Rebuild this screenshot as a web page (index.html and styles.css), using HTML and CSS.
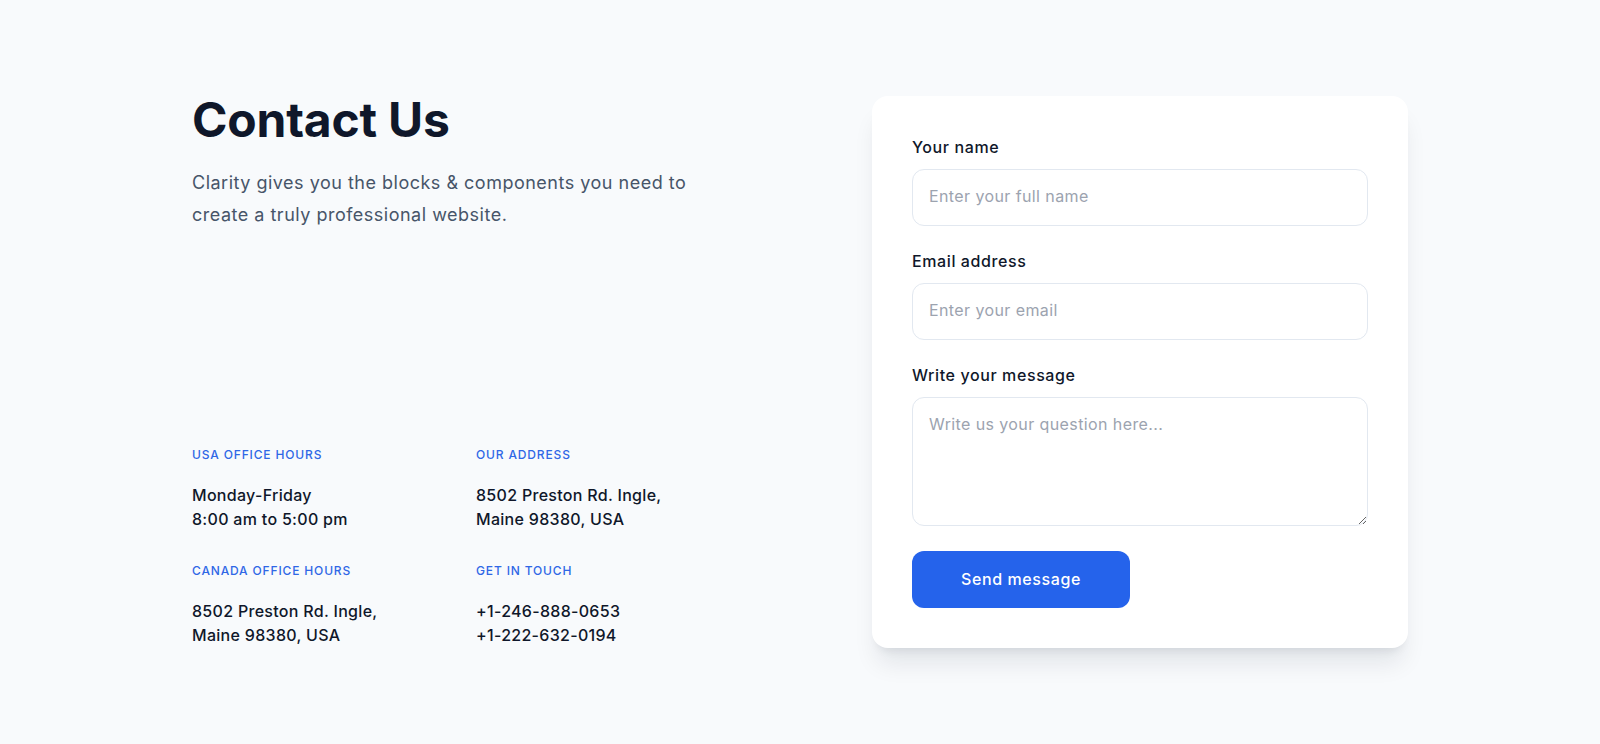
FILE: index.html
```html
<!DOCTYPE html>
<html lang="en">
<head>
<meta charset="utf-8">
<title>Contact Us</title>
<link rel="stylesheet" href="styles.css">
</head>
<body>
<section class="contact">
  <div class="contact__inner">
    <div class="contact__intro">
      <div class="intro__head">
        <h1 class="intro__title">Contact Us</h1>
        <p class="intro__lead">Clarity gives you the blocks &amp; components you need to create a truly professional website.</p>
      </div>
      <div class="info-grid">
        <div class="info">
          <h3 class="info__label">USA office hours</h3>
          <p class="info__value">Monday-Friday<br>8:00 am to 5:00 pm</p>
        </div>
        <div class="info">
          <h3 class="info__label">Our address</h3>
          <p class="info__value">8502 Preston Rd. Ingle,<br>Maine 98380, USA</p>
        </div>
        <div class="info">
          <h3 class="info__label">Canada office hours</h3>
          <p class="info__value">8502 Preston Rd. Ingle,<br>Maine 98380, USA</p>
        </div>
        <div class="info">
          <h3 class="info__label">Get in touch</h3>
          <p class="info__value">+1-246-888-0653<br>+1-222-632-0194</p>
        </div>
      </div>
    </div>

    <form class="card">
      <div class="field">
        <label class="field__label" for="name">Your name</label>
        <input class="field__input" id="name" type="text" placeholder="Enter your full name">
      </div>
      <div class="field">
        <label class="field__label" for="email">Email address</label>
        <input class="field__input" id="email" type="email" placeholder="Enter your email">
      </div>
      <div class="field">
        <label class="field__label" for="message">Write your message</label>
        <textarea class="field__input field__input--area" id="message" placeholder="Write us your question here..."></textarea>
      </div>
      <button class="btn" type="button">Send message</button>
    </form>
  </div>
</section>
</body>
</html>
```

FILE: styles.css
```css
* {
  box-sizing: border-box;
}

html,
body {
  margin: 0;
  padding: 0;
}

body {
  background: #f8fafc;
  font-family: Inter, "Open Sans", "Liberation Sans", sans-serif;
  color: #0f172a;
  -webkit-font-smoothing: antialiased;
}

.contact {
  padding: 96px 0;
}

.contact__inner {
  width: 1216px;
  margin: 0 auto;
  display: grid;
  grid-template-columns: 536px 536px;
  column-gap: 144px;
}

/* left column: heading on top, office details pinned to the bottom */
.contact__intro {
  display: flex;
  flex-direction: column;
  justify-content: space-between;
}

.intro__title {
  margin: 0;
  font-size: 48px;
  line-height: 48px;
  font-weight: 700;
  letter-spacing: -0.2px;
  color: #0f172a;
}

.intro__lead {
  margin: 23px 0 0;
  max-width: 520px;
  font-size: 18px;
  line-height: 32px;
  letter-spacing: 0.5px;
  color: #475569;
}

.info-grid {
  display: grid;
  grid-template-columns: 1fr 1fr;
  column-gap: 32px;
  row-gap: 32px;
  padding-bottom: 1px;
}

.info__label {
  margin: 0 0 20px;
  font-size: 12px;
  line-height: 16px;
  font-weight: 500;
  letter-spacing: 0.85px;
  text-transform: uppercase;
  color: #2f67e6;
}

.info__value {
  margin: 0;
  font-size: 16px;
  line-height: 24px;
  font-weight: 500;
  letter-spacing: 0.3px;
  color: #0f172a;
}

/* form card */
.card {
  background: #fff;
  border-radius: 16px;
  padding: 40px;
  box-shadow: 0 20px 25px -5px rgba(15, 23, 42, 0.09), 0 8px 10px -6px rgba(15, 23, 42, 0.09);
}

.field {
  margin-bottom: 24px;
}

.field__label {
  display: block;
  margin-bottom: 9px;
  font-size: 16px;
  line-height: 22px;
  padding-bottom: 2px;
  font-weight: 500;
  letter-spacing: 0.6px;
  color: #0f172a;
}

.field__input {
  display: block;
  width: 100%;
  height: 57px;
  padding: 0 16px 3px;
  border: 1px solid #e2e8f0;
  border-radius: 12px;
  background: #fff;
  font-family: inherit;
  font-size: 16px;
  letter-spacing: 0.4px;
  color: #0f172a;
  outline: none;
}

.field__input::placeholder {
  color: #9ca3af;
}

.field__input--area {
  height: 129px;
  padding: 14px 16px;
  line-height: 24px;
  resize: vertical;
}

.btn {
  display: block;
  margin-top: 25px;
  height: 57px;
  padding: 0 49px 2px;
  border: 0;
  border-radius: 12px;
  background: #2563eb;
  color: #fff;
  font-family: inherit;
  font-size: 16px;
  font-weight: 500;
  letter-spacing: 0.6px;
  cursor: pointer;
}
```
